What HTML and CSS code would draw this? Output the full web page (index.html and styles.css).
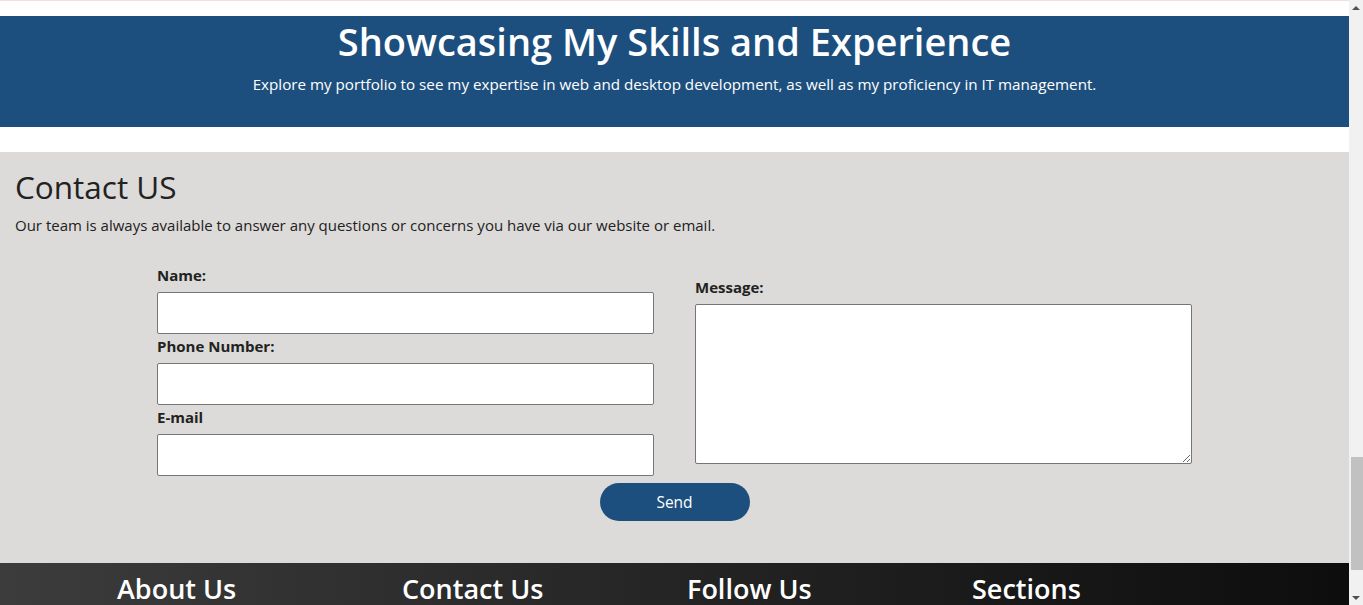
FILE: index.html
```html
<!DOCTYPE html>
<html lang="en">
<head>
<meta charset="utf-8">
<title>Portfolio</title>
<link rel="stylesheet" href="styles.css">
</head>
<body>
<div class="page">
  <div class="topline"></div>
  <section class="hero">
    <h1 class="hero-title">Showcasing My Skills and Experience</h1>
    <p class="hero-sub">Explore my portfolio to see my expertise in web and desktop development, as well as my proficiency in IT management.</p>
  </section>
  <section class="contact">
    <h2 class="contact-title">Contact US</h2>
    <p class="contact-text">Our team is always available to answer any questions or concerns you have via our website or email.</p>
    <form class="contact-form">
      <div class="form-grid">
        <div class="col">
          <label class="field-label" for="name">Name:</label>
          <input class="field" id="name" type="text">
          <label class="field-label" for="phone">Phone Number:</label>
          <input class="field" id="phone" type="text">
          <label class="field-label" for="email">E-mail</label>
          <input class="field" id="email" type="text">
        </div>
        <div class="col">
          <label class="field-label" for="msg">Message:</label>
          <textarea class="field area" id="msg"></textarea>
        </div>
      </div>
      <div class="actions">
        <button class="send" type="button">Send</button>
      </div>
    </form>
  </section>
  <footer class="footer">
    <h3 class="footer-head">About Us</h3>
    <h3 class="footer-head">Contact Us</h3>
    <h3 class="footer-head">Follow Us</h3>
    <h3 class="footer-head">Sections</h3>
  </footer>
</div>
<div class="scrollbar">
  <div class="sb-arrow sb-up"></div>
  <div class="sb-track"><div class="sb-thumb"></div></div>
  <div class="sb-arrow sb-down"></div>
</div>
</body>
</html>
```

FILE: styles.css
```css
html, body {
  margin: 0;
  padding: 0;
  height: 100%;
  overflow: hidden;
}
body {
  font-family: "Open Sans", "Noto Sans", sans-serif;
  color: #222;
  background: #fff;
}
.page {
  width: calc(100% - 14px);
}
.topline {
  height: 1px;
  background: #f3dfdb;
  margin-bottom: 15px;
}
.hero {
  background: #1d4f7e;
  color: #fff;
  height: 111px;
  text-align: center;
  box-sizing: border-box;
}
.hero-title {
  margin: 0;
  font-size: 38px;
  font-weight: 600;
  line-height: 50px;
}
.hero-sub {
  margin: 0;
  font-size: 15.2px;
  line-height: 36px;
}
.contact {
  margin-top: 25px;
  background: #dcdbd9;
  height: 411px;
  box-sizing: border-box;
  padding: 17px 15px 0;
}
.contact-title {
  margin: 0;
  font-size: 31.5px;
  font-weight: 500;
  line-height: 36px;
  color: #222;
}
.contact-text {
  margin: 10px 0 0;
  font-size: 15px;
  line-height: 20px;
}
.contact-form {
  margin-top: 30px;
}
.form-grid {
  width: 1035px;
  margin: 0 auto;
  display: grid;
  grid-template-columns: 497px 497px;
  column-gap: 41px;
  align-items: center;
}
.col {
  display: flex;
  flex-direction: column;
}
.field-label {
  font-size: 15px;
  font-weight: 700;
  line-height: 20px;
  margin-bottom: 7px;
}
.field {
  box-sizing: border-box;
  width: 100%;
  height: 42px;
  margin: 0 0 2px;
  border: 1px solid #767676;
  border-radius: 2px;
  background: #fff;
  font: inherit;
}
.col .field:last-child {
  margin-bottom: 0;
}
.area {
  height: 160px;
  resize: both;
}
.actions {
  display: flex;
  justify-content: center;
  margin-top: 7px;
}
.send {
  width: 150px;
  height: 38px;
  border: none;
  border-radius: 19px;
  background: #1d4f7e;
  color: #fff;
  font-family: inherit;
  font-size: 15.5px;
  cursor: pointer;
}
.footer {
  height: 60px;
  background: linear-gradient(to right, #3c3c3c, #0d0d0d);
  display: grid;
  grid-template-columns: repeat(4, 285px);
  padding-left: 117px;
  padding-top: 9px;
  box-sizing: border-box;
}
.footer-head {
  margin: 0;
  color: #fff;
  font-size: 27px;
  font-weight: 600;
  line-height: 34px;
}
.scrollbar {
  position: fixed;
  top: 0;
  right: 0;
  width: 14px;
  height: 100%;
  background: #f1f1f1;
  display: flex;
  flex-direction: column;
}
.sb-arrow {
  height: 14px;
  position: relative;
}
.sb-up::after, .sb-down::after {
  content: "";
  position: absolute;
  left: 3px;
  border-left: 4px solid transparent;
  border-right: 4px solid transparent;
}
.sb-up::after {
  top: 6px;
  border-bottom: 4px solid #505050;
}
.sb-down::after {
  top: 5px;
  border-top: 4px solid #505050;
}
.sb-track {
  flex: 1;
  position: relative;
}
.sb-thumb {
  position: absolute;
  left: 2px;
  right: 0;
  top: 443px;
  height: 113px;
  background: #c1c1c1;
}
```
